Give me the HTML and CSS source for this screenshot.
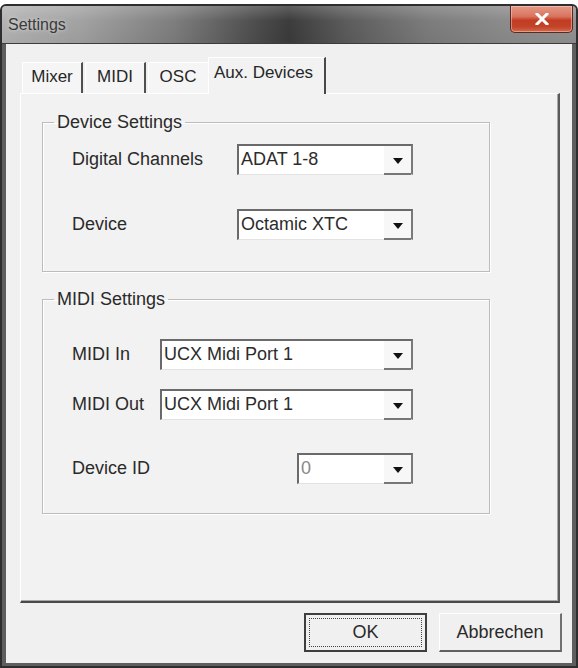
FILE: index.html
```html
<!DOCTYPE html>
<html>
<head>
<meta charset="utf-8">
<title>Settings</title>
<link rel="stylesheet" href="styles.css">
</head>
<body>
<div class="window">
  <div class="titlebar">
    <span class="title">Settings</span>
    <div class="close">
      <svg width="14" height="12" viewBox="0 0 14 12"><path d="M2 1L12 11M12 1L2 11" stroke="#fff" stroke-width="3" stroke-linecap="square"/></svg>
    </div>
  </div>
  <div class="client">
    <div class="tabs">
      <div class="tab">Mixer</div>
      <div class="tab">MIDI</div>
      <div class="tab before-active">OSC</div>
      <div class="tab active">Aux. Devices</div>
    </div>
    <div class="panel">
      <fieldset class="group g1">
        <legend>Device Settings</legend>
        <div class="rows rows1">
          <div class="row">
            <span class="label lw1">Digital Channels</span>
            <div class="combo cw1"><span class="val">ADAT 1-8</span><span class="drop"><svg width="10" height="6" viewBox="0 0 10 6"><path d="M0 0H10L5 6Z" fill="#111"/></svg></span></div>
          </div>
          <div class="row row-gap1">
            <span class="label lw1">Device</span>
            <div class="combo cw1"><span class="val">Octamic XTC</span><span class="drop"><svg width="10" height="6" viewBox="0 0 10 6"><path d="M0 0H10L5 6Z" fill="#111"/></svg></span></div>
          </div>
        </div>
      </fieldset>
      <fieldset class="group g2">
        <legend>MIDI Settings</legend>
        <div class="rows rows2">
          <div class="row">
            <span class="label lw2">MIDI In</span>
            <div class="combo cw2"><span class="val">UCX Midi Port 1</span><span class="drop"><svg width="10" height="6" viewBox="0 0 10 6"><path d="M0 0H10L5 6Z" fill="#111"/></svg></span></div>
          </div>
          <div class="row row-gap2">
            <span class="label lw2">MIDI Out</span>
            <div class="combo cw2"><span class="val">UCX Midi Port 1</span><span class="drop"><svg width="10" height="6" viewBox="0 0 10 6"><path d="M0 0H10L5 6Z" fill="#111"/></svg></span></div>
          </div>
          <div class="row row-gap3">
            <span class="label lw3">Device ID</span>
            <div class="combo cw3"><span class="val val-light">0</span><span class="drop"><svg width="10" height="6" viewBox="0 0 10 6"><path d="M0 0H10L5 6Z" fill="#111"/></svg></span></div>
          </div>
        </div>
      </fieldset>
    </div>
    <div class="buttons">
      <button class="btn ok"><span class="focus">OK</span></button>
      <button class="btn">Abbrechen</button>
    </div>
  </div>
</div>
</body>
</html>
```

FILE: styles.css
```css
* { box-sizing: border-box; }
html, body { margin: 0; padding: 0; }
body {
  background: #fff;
  font-family: "Liberation Sans", Arial, sans-serif;
  color: #222;
  width: 578px;
  height: 668px;
  overflow: hidden;
}
.window {
  margin-top: 4px;
  height: 664px;
  border: 2px solid #2e2e2e;
  border-radius: 6px 6px 0 0;
  background: #5e5e5e;
  display: flex;
  flex-direction: column;
}
.titlebar {
  height: 38px;
  flex: none;
  display: flex;
  align-items: flex-start;
  border-bottom: 1px solid #3c3c3c;
  border-radius: 4px 4px 0 0;
  background:
    linear-gradient(180deg, rgba(255,255,255,0.18) 0%, rgba(255,255,255,0) 40%, rgba(0,0,0,0.05) 100%),
    linear-gradient(90deg, #b4b4b4 0%, #a2a2a2 14%, #7e7e7e 30%, #4e4e4e 44%, #3c3c3c 50%, #5c5c5c 60%, #7c7c7c 74%, #8c8c8c 88%, #929292 100%);
}
.title {
  margin: 9px 0 0 6px;
  font-size: 16px;
  line-height: 20px;
  color: #3a3a3a;
  text-shadow: 0 0 4px rgba(255,255,255,0.6);
}
.close {
  margin-left: auto;
  margin-right: 3px;
  width: 63px;
  height: 27px;
  border: 1px solid #5a2a22;
  border-top: none;
  border-radius: 0 0 5px 5px;
  background: linear-gradient(180deg, #e59a88 0%, #d8745e 40%, #c23c22 55%, #c24428 80%, #d66a4e 100%);
  box-shadow: inset 0 0 0 1px rgba(255,220,210,0.45);
  display: flex;
  align-items: center;
  justify-content: center;
}
.client {
  flex: 1;
  margin: 0 4px 3px 4px;
  background: #f0f0f0;
  padding: 13px 10px 0 14px;
  display: flex;
  flex-direction: column;
}
.tabs {
  display: flex;
  align-items: flex-end;
  height: 36px;
  padding-left: 2px;
  position: relative;
  z-index: 1;
}
.tab {
  height: 31px;
  width: 61px;
  margin-right: 2px;
  background: #f5f5f5;
  border-top: 1px solid #fff;
  border-left: 1px solid #fff;
  border-right: 2px solid #505050;
  font-size: 17px;
  line-height: 28px;
  text-align: center;
  color: #262626;
}
.tab.before-active { border-right-color: #f5f5f5; margin-right: 0; }
.tab.active {
  height: 37px;
  width: 118px;
  margin-left: -1px;
  margin-bottom: -1px;
  background: #f2f2f2;
  border-right: 2px solid #484848;
  line-height: 30px;
  padding-right: 6px;
}
.panel {
  height: 510px;
  flex: none;
  margin-right: 2px;
  background: #f2f2f2;
  border-top: 1px solid #fff;
  border-left: 1px solid #fff;
  border-right: 2px solid #5a5a5a;
  border-bottom: 2px solid #4a4a4a;
  box-shadow: inset -1px -1px 0 #a8a8a8;
  padding-left: 21px;
}
.group {
  width: 448px;
  margin: 0;
  padding: 0;
  border: 1px solid #bcbcbc;
  box-shadow: inset 1px 1px 0 #fff, 1px 1px 0 #fff;
  min-inline-size: 0;
}
.group legend {
  margin-left: 11px;
  padding: 0 3px;
  font-size: 18px;
  line-height: 20px;
  color: #2a2a2a;
}
.g1 { margin-top: 18px; }
.g2 { margin-top: 17px; }
.rows { padding-left: 29px; }
.rows1 { padding-top: 12px; padding-bottom: 31px; }
.rows2 { padding-top: 30px; padding-bottom: 29px; }
.row {
  display: flex;
  align-items: center;
  height: 31px;
}
.row-gap1 { margin-top: 34px; }
.row-gap2 { margin-top: 19px; }
.row-gap3 { margin-top: 33px; }
.label {
  font-size: 18px;
  color: #2a2a2a;
  flex: none;
}
.lw1 { width: 165px; }
.lw2 { width: 88px; }
.lw3 { width: 225px; }
.combo {
  height: 31px;
  display: flex;
  background: #fff;
  border-top: 2px solid #6a6a6a;
  border-left: 2px solid #6a6a6a;
  border-right: 2px solid #7a7a7a;
  border-bottom: 1px solid #e2e2e2;
  flex: none;
}
.cw1 { width: 176px; }
.cw2 { width: 253px; }
.cw3 { width: 116px; }
.val {
  flex: 1;
  padding-left: 2px;
  font-size: 18px;
  line-height: 26px;
  color: #2c2c2c;
  white-space: nowrap;
  overflow: hidden;
}
.val-light { color: #888; }
.drop {
  width: 27px;
  flex: none;
  background: #f7f7f7;
  border-bottom: 2px solid #777;
  margin-bottom: -1px;
  display: flex;
  align-items: center;
  justify-content: center;
  padding-top: 2px;
}
.buttons {
  display: flex;
  justify-content: flex-end;
  gap: 12px;
  margin-top: 10px;
}
.btn {
  width: 123px;
  height: 39px;
  margin: 0;
  padding: 0;
  background: #f0f0f0;
  font-family: "Liberation Sans", Arial, sans-serif;
  font-size: 18px;
  color: #2a2a2a;
  border-top: 1px solid #fff;
  border-left: 1px solid #fff;
  border-right: 2px solid #707070;
  border-bottom: 2px solid #606060;
}
.btn.ok {
  border: 2px solid #3e3e3e;
  padding: 3px;
  display: flex;
}
.focus {
  flex: 1;
  border: 1px dotted #444;
  display: flex;
  align-items: center;
  justify-content: center;
}
```
